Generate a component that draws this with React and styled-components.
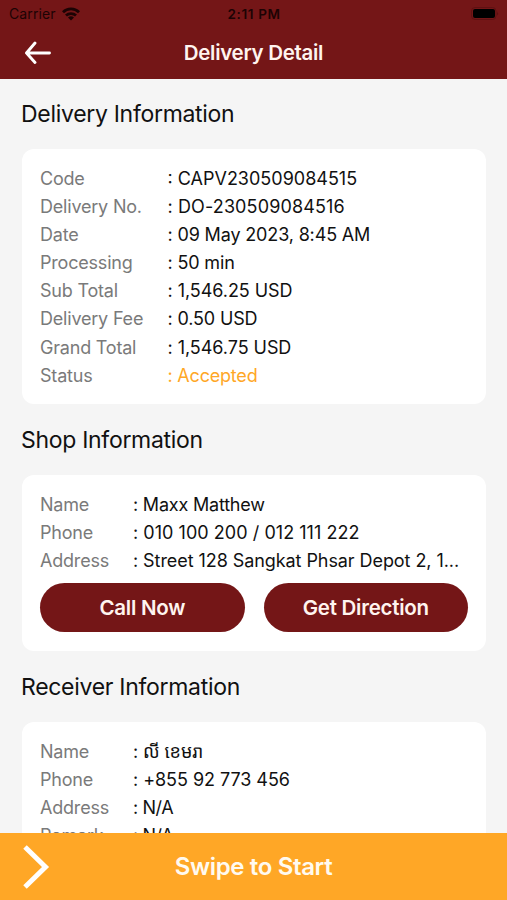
import React from "react";
import styled, { createGlobalStyle } from "styled-components";

const GlobalStyle = createGlobalStyle`
  * {
    box-sizing: border-box;
  }

  body {
    margin: 0;
    background-color: #f5f5f5;
    font-family: Inter, "Liberation Sans", "Noto Sans", "Noto Sans Khmer", sans-serif;
  }
`;

const Screen = styled.div`
  display: flex;
  flex-direction: column;
  height: 900px;
  overflow: hidden;
  color: #111;
`;

const Header = styled.header`
  flex: none;
  height: 79px;
  background-color: #741617;
`;

const StatusBar = styled.div`
  display: grid;
  grid-template-columns: 1fr auto 1fr;
  align-items: center;
  height: 27px;
  padding: 0 8px 0 9px;
  color: #1c0304;
  font-size: 14px;
`;

const Carrier = styled.div`
  display: flex;
  align-items: center;
  gap: 6px;
  letter-spacing: 0.1px;
`;

const Time = styled.div`
  font-weight: 600;
  font-size: 13.5px;
  letter-spacing: 0.65px;
`;

const Battery = styled.svg`
  justify-self: end;
`;

const NavBar = styled.div`
  display: grid;
  grid-template-columns: 80px 1fr 80px;
  align-items: center;
  height: 49px;
`;

const BackButton = styled.button`
  display: flex;
  padding: 0 0 0 24px;
  border: 0;
  background: none;
`;

const Title = styled.h1`
  margin: 0;
  color: #fff4ef;
  text-align: center;
  font-size: 20.5px;
  font-weight: 600;
  line-height: 51px;
  letter-spacing: -0.3px;
`;

const Content = styled.main`
  flex: 1;
  min-height: 0;
  overflow: hidden;
  padding: 0 21px 0 22px;
`;

const SectionTitle = styled.h2`
  height: 71px;
  margin: 0 0 0 -1px;
  font-size: 23px;
  font-weight: 400;
  line-height: 73px;
  letter-spacing: -0.3px;

  &:first-child {
    height: 70px;
    line-height: 70px;
  }
`;

const Card = styled.section`
  padding: 16px 18px ${({ $bottom }) => $bottom || 18.5}px;
  border-radius: 12px;
  background-color: #fff;
`;

const Row = styled.div`
  display: grid;
  grid-template-columns: ${({ $label }) => $label}px 1fr;
  height: 28.1px;
  font-size: 18px;
  line-height: 28px;
`;

const Label = styled.span`
  color: #7a7a7a;
  letter-spacing: -0.2px;
`;

const Value = styled.span`
  overflow: hidden;
  white-space: nowrap;
  text-overflow: ellipsis;
  color: ${({ $accent }) => ($accent ? "#ffa726" : "#111")};
  letter-spacing: ${({ $spacing }) => $spacing ?? -0.15}px;
`;

const Actions = styled.div`
  display: grid;
  grid-template-columns: 1fr 1fr;
  gap: 19px;
  padding-top: 8.2px;
`;

const Button = styled.button`
  height: 49px;
  padding: 0;
  border: 0;
  border-radius: 25px;
  background-color: #741617;
  color: #fff4ef;
  font-family: inherit;
  font-size: 20.5px;
  font-weight: 600;
  letter-spacing: -0.25px;
`;

const SwipeBar = styled.footer`
  display: grid;
  grid-template-columns: 80px 1fr 80px;
  align-items: center;
  flex: none;
  height: 67px;
  background-color: #ffa726;
  color: #fffaf0;
  text-align: center;
  font-size: 24px;
  font-weight: 600;
  letter-spacing: -0.35px;

  svg {
    margin-left: 22px;
  }
`;

const delivery = [
  { label: "Code", value: "CAPV230509084515", spacing: 0 },
  { label: "Delivery No.", value: "DO-230509084516", spacing: 0.12 },
  { label: "Date", value: "09 May 2023, 8:45 AM" },
  { label: "Processing", value: "50 min" },
  { label: "Sub Total", value: "1,546.25 USD", spacing: -0.05 },
  { label: "Delivery Fee", value: "0.50 USD", spacing: -0.15 },
  { label: "Grand Total", value: "1,546.75 USD", spacing: -0.05 },
  { label: "Status", value: "Accepted", accent: true, spacing: -0.2 },
];

const shop = [
  { label: "Name", value: "Maxx Matthew", spacing: -0.2 },
  { label: "Phone", value: "010 100 200 / 012 111 222", spacing: 0.04 },
  { label: "Address", value: "Street 128 Sangkat Phsar Depot 2, 1...", spacing: -0.07 },
];

const receiver = [
  { label: "Name", value: "លី ខេមរា" },
  { label: "Phone", value: "+855 92 773 456", spacing: -0.05 },
  { label: "Address", value: "N/A", spacing: -0.4 },
  { label: "Remark", value: "N/A", spacing: -0.4 },
];

const Rows = ({ items, labelWidth }) =>
  items.map((item) => (
    <Row key={item.label} $label={labelWidth}>
      <Label>{item.label}</Label>
      <Value $accent={item.accent} $spacing={item.spacing}>
        : {item.value}
      </Value>
    </Row>
  ));

const App = () => {
  return (
    <Screen>
      <GlobalStyle />
      <Header>
        <StatusBar>
          <Carrier>
            Carrier
            <svg width="18" height="14" viewBox="0 0 18 14" fill="none" stroke="#1c0304" strokeWidth="2.8">
              <path d="M1 5.2a11.5 11.5 0 0 1 16 0" />
              <path d="M4 8.6a7.2 7.2 0 0 1 10 0" />
              <path d="M9 13.6L6 10.6a4.3 4.3 0 0 1 6 0z" fill="#1c0304" stroke="none" />
            </svg>
          </Carrier>
          <Time>2:11 PM</Time>
          <Battery width="28" height="13" viewBox="0 0 28 13">
            <rect x="0.5" y="0.5" width="24.5" height="12" rx="3.5" fill="none" stroke="#5f1112" />
            <rect x="2" y="2" width="22" height="9" rx="2" fill="#000" />
            <path d="M26.3 4.5q1.4 2 0 4z" fill="#4f0d0e" />
          </Battery>
        </StatusBar>
        <NavBar>
          <BackButton aria-label="Back">
            <svg width="28" height="24" viewBox="0 0 28 24" fill="none" stroke="#fff" strokeWidth="2.9" strokeLinecap="round" strokeLinejoin="round">
              <path d="M11 2L2.5 12L11 21.5M2.5 12H25.5" />
            </svg>
          </BackButton>
          <Title>Delivery Detail</Title>
        </NavBar>
      </Header>

      <Content>
        <SectionTitle>Delivery Information</SectionTitle>
        <Card $bottom={14.2}>
          <Rows items={delivery} labelWidth={127.5} />
        </Card>

        <SectionTitle>Shop Information</SectionTitle>
        <Card>
          <Rows items={shop} labelWidth={93} />
          <Actions>
            <Button>Call Now</Button>
            <Button>Get Direction</Button>
          </Actions>
        </Card>

        <SectionTitle>Receiver Information</SectionTitle>
        <Card>
          <Rows items={receiver} labelWidth={93} />
        </Card>
      </Content>

      <SwipeBar>
        <svg width="28" height="46" viewBox="0 0 28 46" fill="none" stroke="#fff" strokeWidth="5">
          <path d="M3 3L23.5 23L3 43" />
        </svg>
        Swipe to Start
      </SwipeBar>
    </Screen>
  );
};

export default App;
